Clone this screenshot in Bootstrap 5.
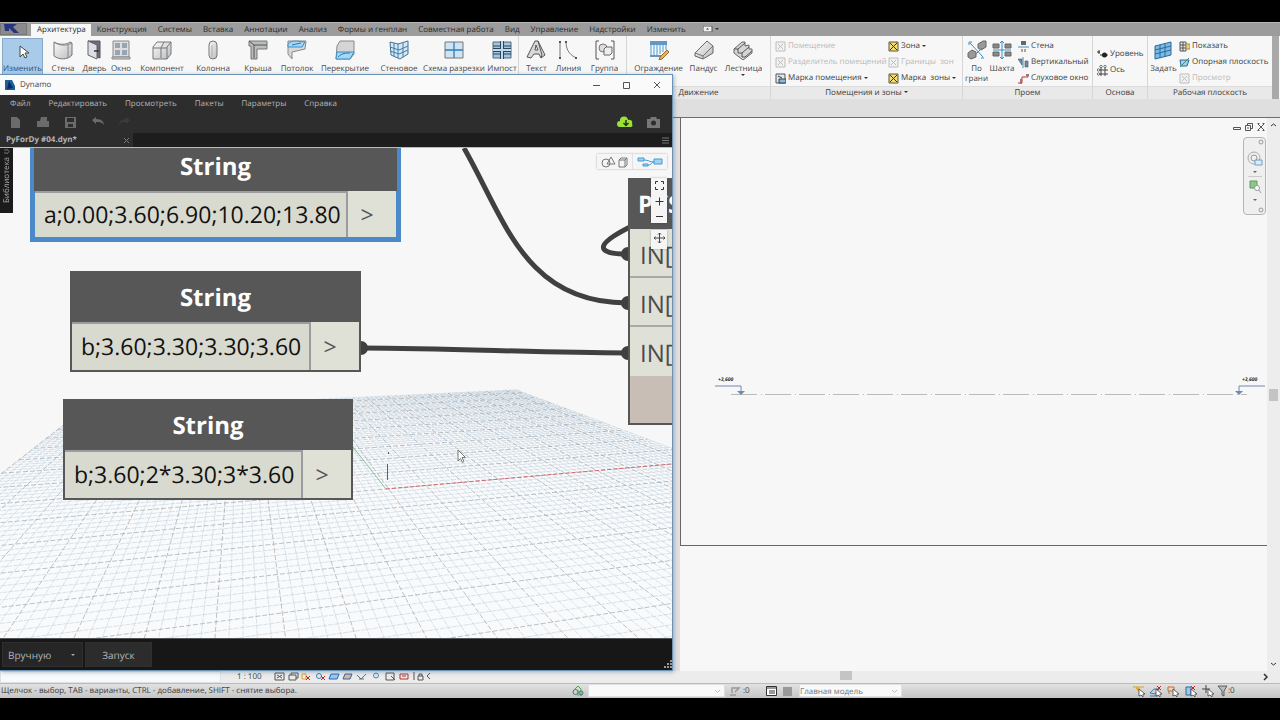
<!DOCTYPE html>
<html lang="ru">
<head>
<meta charset="utf-8">
<meta name="viewport" content="width=device-width, initial-scale=1">
<title>Dynamo</title>
<link href="https://cdn.jsdelivr.net/npm/bootstrap@5.3.0/dist/css/bootstrap.min.css" rel="stylesheet">
<script src="https://cdn.jsdelivr.net/npm/bootstrap@5.3.0/dist/js/bootstrap.bundle.min.js"></script>
<style>
  body { background:#000; font-family:"Open Sans","Noto Sans",sans-serif; font-size:8px; line-height:12px; color:#3c3c3c; padding:22px 0; text-rendering:geometricPrecision; }
  button, input, select { font:inherit; color:inherit; border:0; background:none; padding:0; border-radius:0; text-rendering:inherit; }
  button { white-space:nowrap; }
  a { color:inherit; text-decoration:none; white-space:nowrap; }
  svg { display:block; flex:none; }
  .revit { background:#f7f7f7; }

  /* ribbon */
  .tabs-row { height:14px; background:#9c9c9c; border-top:1px solid #b5b5b5; color:#2b2b2b; }
  .app-btn { width:27px; height:12px; background:#8a8a8a; border:1px solid #777; overflow:hidden; }
  .rtab { padding:0 5px 0 6px; height:12px; line-height:12px; }
  .rtab.active { background:#f7f7f7; }
  .ribbon { height:63px; background:#f7f7f7; }
  .rpanel { border-right:1px solid #d6d6d6; flex:none; }
  .ptitle { height:13px; line-height:12px; background:#e9e9e9; border-top:1px solid #dcdcdc; text-align:center; }
  .tools { display:grid; height:50px; justify-items:center; }
  .big { display:flex; flex-direction:column; align-items:center; padding-top:4px; line-height:10px; justify-self:center; color:#484848; }
  .big svg { width:20px; height:20px; margin-bottom:4px; }
  .big.sel { background:#a9cbea; border:1px solid #86a9c8; padding-top:3px; width:41px; height:40px; margin-top:2px; color:#2b4f74; }
  .big.sel svg { margin-bottom:2px; }
  .smalls { display:flex; flex-direction:column; justify-self:start; padding-top:2px; }
  .smalls button { display:flex; align-items:center; gap:2px; height:16px; line-height:16px; text-align:left; }
  .smalls svg { width:11px; height:11px; }
  .smalls button:disabled { color:#b9b9b9; }
  .smalls button:disabled svg { opacity:.35; filter:grayscale(1); }
  .caret { display:inline-block; border:2px solid transparent; border-top-color:#333; border-bottom:0; margin-left:4px; vertical-align:2px; }
  .p-build { grid-template-columns:45px 36px 27px 26px 56px 46px 44px 34px 62px 46px 64px 32px; }
  .p-model { grid-template-columns:35px 29px 43px; }
  .p-move { grid-template-columns:63px 27px 53px; }
  .p-room { grid-template-columns:113px 77px; padding-left:4px; width:191px; }
  .p-open { grid-template-columns:27px 24px 78px; }
  .p-base { grid-template-columns:54px; }
  .p-plane { grid-template-columns:31px 93px; }
  .handle { width:7px; background:#a9a9a9; margin-right:1px; }
  .options { height:19px; background:#dfdfdf; border-bottom:1px solid #6e6e6e; }

  /* drawing view */
  .gutter { width:680px; background:#e5e0de; }
  .sheet { border-left:1px solid #666; border-bottom:1px solid #666; flex:0 0 428px; }
  .vscroll { width:13px; background:#ededed; }
  .thumb { background:#c4c4c4; }
  .navbar-tool { right:1px; top:19px; width:23px; height:78px; border:1px solid #b5b5b5; border-radius:4px; background:#efefef; }
  .viewbar { height:12px; background:#ececec; }
  .status { height:15px; background:linear-gradient(#e2e2e2,#c4c4c4); border-top:1px solid #bbb; line-height:14px; }
  .status select { background:#f9f9f9; height:13px; appearance:none; border:1px solid #e0e0e0; width:100%; }
  .status .chev { right:4px; top:5px; }
  .status .count-end { width:52px; }

  /* Dynamo window */
  .dyn { left:0; top:74px; bottom:49px; width:673px; background:#1b1b1b; border:1px solid #6b93b5; border-left:0; box-shadow:1px 1px 4px rgba(60,110,150,.5); color:#b4b4b4; }
  .dyn-title { height:20px; background:#fafafa; color:#444; }
  .dyn-menu { height:17px; background:#2d2d2d; padding-left:10px; gap:18px; line-height:17px; }
  .dyn-tools { height:21px; background:#2d2d2d; padding-bottom:2px; }
  .dyn-tabs { height:14px; background:#1d1d1d; line-height:14px; }
  .dyn-tab { width:133px; background:#2d2d2d; font-weight:700; padding:0 3px 0 6px; }
  .stage { background:#f7f7f7; border-top:1px solid #bbb; }
  .lib { left:0; top:0; width:13px; height:65px; background:#1b1b1b; color:#aaa; }
  .lib span { writing-mode:vertical-rl; transform:rotate(180deg); line-height:13px; }
  .gnode { border:2px solid #575757; border-top:0; background:#dfe0d6; }
  .gnode h2 { margin:0 -2px; height:51px; line-height:54px; background:#575757; color:#fff; font-size:24px; font-weight:700; text-align:center; }
  .gnode .vals { height:48px; }
  .gnode input { min-width:0; width:0; color:#111; background:#d9dacf; border-top:2px solid #9c9ca0; border-right:2px solid #9c9ca0; padding:0 0 3px 9px; font-size:23px; }
  .gnode .port { width:48px; font-size:23px; color:#555; padding-right:10px; }
  .gnode.picked { border-color:#4a8ac8; outline:3px solid #4a8ac8; }
  .gnode.picked .vals { height:46px; }
  .gnode.picked h2 { margin:0 -1px; }
  .inp { height:49px; line-height:53px; border-bottom:2px solid #a9aaa6; font-size:24px; color:#4b4b4b; padding-left:10px; }
  .wid { background:#f5f5f5; box-shadow:0 0 2px rgba(0,0,0,.3); }
  .wid button { height:15px; }
  .dyn-foot { height:32px; background:#171717; font-size:10px; line-height:14px; border-top:1px solid #555; padding-left:2px; gap:2px; }
  .dyn-foot select, .dyn-foot .run { height:25px; background:#262626; color:#b4b4b4; border:1px solid #2f2f2f; }
  .dyn-foot select { width:81px; padding-left:5px; appearance:none; }
  .dyn-foot .run { width:67px; background:#2c2c2c; }
</style>
</head>
<body class="vh-100 overflow-hidden position-relative">

<svg width="0" height="0" class="position-absolute" aria-hidden="true">
  <defs>
    <linearGradient id="gr" x1="0" y1="0" x2="1" y2="1"><stop offset="0" stop-color="#fafafa"/><stop offset="1" stop-color="#b9bcc0"/></linearGradient>
    <symbol id="i-arrow" viewBox="0 0 20 20"><path d="M7 4v11l3-3 2 4 2-1-2-4h4z" fill="#fff" stroke="#444"/></symbol>
    <symbol id="i-wall" viewBox="0 0 20 20"><path d="M1 2c5 3 12 3 16 0l2 1v12c-4 5-13 5-18 1z" fill="url(#gr)" stroke="#777"/><path d="M1 2c5 4 13 4 18 1M15 5v13" fill="none" stroke="#888"/></symbol>
    <symbol id="i-door" viewBox="0 0 20 20"><path d="M4 1h12v17l-3-1V5z" fill="#6b6f7c" stroke="#555"/><path d="M4 1l9 4v14l-9-4z" fill="#dcdfe5" stroke="#666"/><path d="M10 11h5" stroke="#333" stroke-width="1.5"/></symbol>
    <symbol id="i-window" viewBox="0 0 20 20"><path d="M2 1h16v16H2z" fill="#ddd" stroke="#888"/><path d="M4 3h5v5H4zM11 3h5v5h-5zM4 10h5v5H4zM11 10h5v5h-5z" fill="#98a3b3"/><path d="M1 17h18v2H1z" fill="#ccc" stroke="#888"/></symbol>
    <symbol id="i-comp" viewBox="0 0 20 20"><path d="M1 7l4-5h14v12l-4 5H1z" fill="url(#gr)" stroke="#777"/><path d="M1 8h8v10M9 8l3-6M15 19V7l4-5M9 8h6" fill="none" stroke="#777"/></symbol>
    <symbol id="i-col" viewBox="0 0 20 20"><rect x="6" y="1" width="8" height="18" rx="4" fill="url(#gr)" stroke="#777"/><path d="M9 5v12" stroke="#aaa"/></symbol>
    <symbol id="i-roof" viewBox="0 0 20 20"><path d="M1 1h18v8H9v10H3V6H1z" fill="#b9bdbd" stroke="#777"/><path d="M1 1l5 4v13M6 5h13" fill="none" stroke="#555"/></symbol>
    <symbol id="i-ceil" viewBox="0 0 20 20"><path d="M1 1h18l-1 8-13 3v7l-4-5z" fill="#d8d8d8" stroke="#888"/><path d="M1 4c4-4 8-3 17-2l-3 5H1z" fill="#a8d5f0" stroke="#3a8fc7"/><path d="M5 5l9-2" stroke="#2a78b8"/></symbol>
    <symbol id="i-floor" viewBox="0 0 20 20"><path d="M5 1h14v13l-4 5H1l1-13z" fill="#d5d5d5" stroke="#888"/><path d="M2 12h17l-4 7H1z" fill="#a8d5f0" stroke="#3a8fc7"/><path d="M3 17c4-4 8-4 12-4" fill="none" stroke="#2a78b8"/></symbol>
    <symbol id="i-curtain" viewBox="0 0 20 20"><path d="M1 2l8 2 10-3v13l-8 5-9-4z" fill="#d4e8f5" stroke="#49728f"/><path d="M5 3v13M9 4v14M14 3v14M1 7l9 3 9-4M1 11l9 3 9-4" fill="none" stroke="#3f7fab"/></symbol>
    <symbol id="i-grid4" viewBox="0 0 20 20"><path d="M1 2h18v16H1z" fill="#cfe3f0" stroke="#777"/><path d="M10 2v16M1 10h18" stroke="#2b7fbd" stroke-width="1.3"/></symbol>
    <symbol id="i-mull" viewBox="0 0 20 20"><path d="M1 2h18v16H1z" fill="#9dc7e3" stroke="#567"/><path d="M1 6h18M1 14h18" stroke="#345"/><path d="M10 1v18M1 10h18" stroke="#345" stroke-width="4"/><path d="M10 1v18M1 10h18" stroke="#b9dcf2" stroke-width="2"/></symbol>
    <symbol id="i-text" viewBox="0 0 20 20"><path d="M1 17L9 1h3l7 14-4 3-2-4H8l-3 4zM9 10h3l-2-5z" fill="#d8d8d8" stroke="#555" fill-rule="evenodd"/><path d="M12 1l4 14-1 3" fill="none" stroke="#555"/></symbol>
    <symbol id="i-line" viewBox="0 0 20 20"><path d="M2 2v16M8 2c0 9 5 14 11 16" fill="none" stroke="#777"/><g fill="#555"><path d="M1 1h2v2H1zM1 17h2v2H1zM7 1h2v2H7zM17 17h2v2h-2z"/></g></symbol>
    <symbol id="i-group" viewBox="0 0 20 20"><path d="M4 1H1v18h3M16 1h3v18h-3" fill="none" stroke="#555"/><circle cx="8" cy="8" r="4" fill="#ddd" stroke="#777"/><path d="M9 9l2-2h6v6l-2 2H9z" fill="#eee" stroke="#666"/></symbol>
    <symbol id="i-rail" viewBox="0 0 20 20"><path d="M1 2h17M1 4h17M1 16h12" stroke="#3579ad" stroke-width="1.6"/><path d="M2 4v12M5 4v12M8 4v12M11 4v10M14 4v8M17 4v6" stroke="#4d9dd8"/><path d="M18 10l2 2-7 7-3 1 1-3z" fill="#e8b15a" stroke="#996b2a"/></symbol>
    <symbol id="i-ramp" viewBox="0 0 20 20"><path d="M1 13L13 1l6 5v7l-10 6-8-3z" fill="url(#gr)" stroke="#666"/><path d="M1 13l8 3L19 6M9 16v3" fill="none" stroke="#777"/></symbol>
    <symbol id="i-stair" viewBox="0 0 20 20"><path d="M1 9l8-7h3v4l4-1v4h3v4l-9 7-9-7z" fill="#d6d6d6" stroke="#666"/><path d="M1 9h4v4h4v4h3M5 9l7-6M9 13l7-6M12 17l7-6" fill="none" stroke="#555"/></symbol>
    <symbol id="i-face" viewBox="0 0 20 20"><path d="M11 4l5-3h3v6l-5 3-3-2zM1 13l4-3 4 2v5l-5 2-3-2z" fill="#999" stroke="#666"/><path d="M3 3l13 14M2 2h3M2 2v3M17 18h-3M8 15L15 8" stroke="#3a8fc7"/></symbol>
    <symbol id="i-shaft" viewBox="0 0 20 20"><path d="M1 4h6v4H1zM13 4h6v4h-6zM1 12h6v4H1zM13 12h6v4h-6z" fill="#888" stroke="#666"/><path d="M10 1v18M8 3l2-2 2 2M8 17l2 2 2-2M1 10h18" fill="none" stroke="#3a8fc7"/></symbol>
    <symbol id="i-set" viewBox="0 0 20 20"><path d="M2 6l16-4v13L2 19z" fill="#7dbbe6" stroke="#2a6a9b"/><path d="M7 5v13M12 4v13M2 10l16-4M2 14l16-4" stroke="#2a6a9b"/></symbol>
    <symbol id="s-room" viewBox="0 0 11 11"><path d="M1 1h9v9H1z" fill="#dfe8ef" stroke="#555"/><path d="M3 3l5 5M8 3L3 8" stroke="#555"/></symbol>
    <symbol id="s-tag" viewBox="0 0 11 11"><path d="M1 1h9v9H1z" fill="#dfe8ef" stroke="#555"/><path d="M3 3l4 2" stroke="#333"/><path d="M4 6h7v4H4z" fill="#8fb7d6" stroke="#245"/></symbol>
    <symbol id="s-zone" viewBox="0 0 11 11"><path d="M1 1h9v9H1z" fill="#f7dc6a" stroke="#555"/><path d="M2 2l7 7M9 2L2 9" stroke="#333"/></symbol>
    <symbol id="s-wallop" viewBox="0 0 11 11"><path d="M0 6h11" stroke="#3a8fc7"/><path d="M3 0h5v4H3z" fill="#666"/><path d="M4 8v3M7 8v3" stroke="#555"/></symbol>
    <symbol id="s-vert" viewBox="0 0 11 11"><path d="M5 0v11" stroke="#3a8fc7"/><path d="M0 2h4v6zM7 4h3v6H7z" fill="#789" stroke="#456" stroke-width=".6"/></symbol>
    <symbol id="s-dorm" viewBox="0 0 11 11"><path d="M0 10h4V4h6V1" fill="none" stroke="#b33"/><path d="M2 6h2v5H2zM8 1h3v2H8z" fill="#977"/></symbol>
    <symbol id="s-level" viewBox="0 0 11 11"><path d="M0 3h3M2 1v4M3 6h8" stroke="#333"/><circle cx="7.500" cy="6" r="2.500" fill="#222"/></symbol>
    <symbol id="s-axis" viewBox="0 0 11 11"><path d="M4 2v9M8 2v9M2 5h9M2 9h9" stroke="#444"/><g fill="#fff" stroke="#444" stroke-width=".7"><circle cx="4" cy="1.500" r="1.200"/><circle cx="8" cy="1.500" r="1.200"/><circle cx="1.500" cy="5" r="1.200"/><circle cx="1.500" cy="9" r="1.200"/></g></symbol>
    <symbol id="s-show" viewBox="0 0 11 11"><path d="M1 1h6v9H1zM4 1v9M1 4h6M1 7h6" fill="#e8e8e8" stroke="#555"/><path d="M7 3h4v5H7z" fill="#f3d24c" stroke="#987"/></symbol>
    <symbol id="s-ref" viewBox="0 0 11 11"><path d="M1 3h9L8 9H2z" fill="#9fd0f0" stroke="#2a6a9b"/><path d="M1 10L10 1" stroke="#487"/></symbol>
    <g id="lev"><path d="M0 0h26v8" fill="none" stroke="#6f8cae"/><path d="M22 5h8l-4 4z" fill="#6f8cae"/></g>
  </defs>
</svg>

<div class="revit d-flex flex-column h-100">
  <nav class="tabs-row d-flex align-items-end" aria-label="Лента">
    <button class="app-btn me-1 align-self-start" aria-label="Меню приложения"><svg width="25" height="11"><path d="M3 0h13l-4 3 6 6h-5L8 4v3H4z" fill="#27357f"/></svg></button>
    <a href="#" class="rtab active">Архитектура</a><a href="#" class="rtab">Конструкция</a><a href="#" class="rtab">Системы</a><a href="#" class="rtab">Вставка</a><a href="#" class="rtab">Аннотации</a><a href="#" class="rtab">Анализ</a><a href="#" class="rtab">Формы и генплан</a><a href="#" class="rtab">Совместная работа</a><a href="#" class="rtab">Вид</a><a href="#" class="rtab">Управление</a><a href="#" class="rtab">Надстройки</a><a href="#" class="rtab">Изменить</a>
    <button class="ms-2 ps-1 mb-1" aria-label="Вид ленты"><svg width="16" height="6"><path d="M0 0h9v6H0z" fill="#eee" stroke="#555"/><path d="M3 3.500h3L4.500 2z" fill="#333"/><path d="M12 2h4l-2 2z" fill="#333"/></svg></button>
  </nav>

  <div class="ribbon d-flex overflow-hidden">
    <section class="rpanel"><div class="tools p-build">
      <button class="big sel"><svg><use href="#i-arrow"/></svg>Изменить</button>
      <button class="big"><svg><use href="#i-wall"/></svg>Стена</button>
      <button class="big"><svg><use href="#i-door"/></svg>Дверь</button>
      <button class="big"><svg><use href="#i-window"/></svg>Окно</button>
      <button class="big"><svg><use href="#i-comp"/></svg>Компонент</button>
      <button class="big"><svg><use href="#i-col"/></svg>Колонна</button>
      <button class="big"><svg><use href="#i-roof"/></svg>Крыша</button>
      <button class="big"><svg><use href="#i-ceil"/></svg>Потолок</button>
      <button class="big"><svg><use href="#i-floor"/></svg>Перекрытие</button>
      <button class="big"><svg><use href="#i-curtain"/></svg>Стеновое</button>
      <button class="big"><svg><use href="#i-grid4"/></svg>Схема разрезки</button>
      <button class="big"><svg><use href="#i-mull"/></svg>Импост</button>
    </div></section>
    <section class="rpanel"><div class="tools p-model">
      <button class="big"><svg><use href="#i-text"/></svg>Текст</button>
      <button class="big"><svg><use href="#i-line"/></svg>Линия</button>
      <button class="big"><svg><use href="#i-group"/></svg>Группа</button>
    </div></section>
    <section class="rpanel"><div class="tools p-move">
      <button class="big"><svg><use href="#i-rail"/></svg>Ограждение</button>
      <button class="big"><svg><use href="#i-ramp"/></svg>Пандус</button>
      <button class="big"><svg><use href="#i-stair"/></svg>Лестница<span class="caret ms-0"></span></button>
    </div><div class="ptitle">Движение</div></section>
    <section class="rpanel"><div class="tools p-room">
      <div class="smalls"><button disabled><svg><use href="#s-room"/></svg>Помещение</button><button disabled><svg><use href="#s-room"/></svg>Разделитель помещений</button><button><svg><use href="#s-tag"/></svg>Марка помещения <span class="caret ms-0"></span></button></div>
      <div class="smalls"><button><svg><use href="#s-zone"/></svg>Зона <span class="caret ms-0"></span></button><button disabled><svg><use href="#s-room"/></svg>Границы&nbsp; зон</button><button><svg><use href="#s-zone"/></svg>Марка&nbsp; зоны <span class="caret ms-0"></span></button></div>
    </div><div class="ptitle">Помещения и зоны <span class="caret ms-0"></span></div></section>
    <section class="rpanel"><div class="tools p-open">
      <button class="big"><svg><use href="#i-face"/></svg>По<br>грани</button>
      <button class="big"><svg><use href="#i-shaft"/></svg>Шахта</button>
      <div class="smalls ps-1"><button><svg><use href="#s-wallop"/></svg>Стена</button><button><svg><use href="#s-vert"/></svg>Вертикальный</button><button><svg><use href="#s-dorm"/></svg>Слуховое окно</button></div>
    </div><div class="ptitle">Проем</div></section>
    <section class="rpanel"><div class="tools p-base">
      <div class="smalls ps-1 justify-content-center"><button><svg><use href="#s-level"/></svg>Уровень</button><button><svg><use href="#s-axis"/></svg>Ось</button></div>
    </div><div class="ptitle">Основа</div></section>
    <section class="rpanel flex-grow-1 border-0"><div class="tools p-plane">
      <button class="big"><svg><use href="#i-set"/></svg>Задать</button>
      <div class="smalls"><button><svg><use href="#s-show"/></svg>Показать</button><button><svg><use href="#s-ref"/></svg>Опорная плоскость</button><button disabled><svg><use href="#s-room"/></svg>Просмотр</button></div>
    </div><div class="ptitle">Рабочая плоскость</div></section>
    <div class="handle"></div>
  </div>
  <div class="options"></div>

  <main class="flex-grow-1 d-flex overflow-hidden">
    <div class="gutter flex-shrink-0"></div>
    <div class="flex-grow-1 d-flex flex-column position-relative">
      <div class="sheet">
        <svg width="100%" height="100%" aria-label="Уровень">
          <path d="M50 276.500H566" stroke="#bbb" stroke-dasharray="26 4 1 3"/>
          <use href="#lev" x="34" y="268"/><use href="#lev" transform="translate(584 268) scale(-1 1)"/>
          <text x="37" y="263" font-size="5" font-weight="700" font-style="italic" fill="#222">+3,600</text>
          <text x="561" y="263" font-size="5" font-weight="700" font-style="italic" fill="#222">+3,600</text>
        </svg>
      </div>
      <div class="position-absolute end-0 top-0 pt-1">
        <svg width="34" height="10" fill="none" stroke="#555"><path d="M.5 5.500h7v2h-7zM12.500 3.500h5v5h-5zM14.500 3V1.500h5v5H18M14 6h2M25 2l6 6M31 2l-6 6M24.500 1.500h2M29.500 1.500h2M24.500 8.500h2M29.500 8.500h2"/></svg>
      </div>
      <div class="navbar-tool position-absolute d-flex flex-column align-items-center">
        <svg width="21" height="76" fill="none" stroke="#999"><circle cx="17" cy="4" r="2"/><circle cx="17" cy="72" r="2"/><circle cx="10" cy="20" r="6" stroke="#aaa"/><circle cx="10" cy="20" r="3"/><path d="M11 22h7v5h-7z" fill="#dcebf5" stroke="#6fa0c4"/><path d="M9 33h4l-2 2zM9 61h4l-2 2z" fill="#666" stroke="none"/><path d="M4 38.500h14" stroke="#ccc"/><path d="M6 43h7v7H6z" fill="#8fc48f" stroke="#5a9a5a"/><circle cx="13" cy="50" r="2.500" fill="#fff"/><path d="M15 52l2 3"/></svg>
      </div>
    </div>
    <div class="vscroll d-flex flex-column align-items-center justify-content-between pt-1">
      <svg width="9" height="6"><path d="M2 4l2.500-2L7 4" fill="none" stroke="#333"/></svg>
      <div class="thumb w-75" style="height:12px"></div>
      <svg width="9" height="10"><path d="M2 2l2.500 2L7 2" fill="none" stroke="#333"/></svg>
    </div>
  </main>

  <div class="viewbar d-flex align-items-center">
    <div class="border bg-light h-100" style="width:221px"></div>
    <span class="ms-3">1 : 100</span>
    <svg class="ms-2" width="162" height="10" fill="none" stroke="#555"><path d="M5 1h9v7H5zM7 3l5 3M12 3L7 6M19 3h7v5h-7zM21 3V1h7v5h-2"/><path d="M32 2h4v5h-4z" stroke="#d9a520"/><path d="M36 4l4 4M40 4l-4 4" stroke="#c22"/><circle cx="49" cy="4" r="2.500" stroke="#3a7fb7"/><path d="M51 4l4 4M55 4l-4 4" stroke="#c22"/><path d="M59 7l2-5h8l-2 5z" fill="#9cc8e8" stroke="#26c"/><path d="M73 7l2-5h7l-2 5z" fill="#e0b79c" stroke="#36a"/><path d="M87 3l4 4 5-5M89 7h5" stroke="#577"/><circle cx="106" cy="3.500" r="2.500" fill="#cfe8fa" stroke="#58a"/><path d="M116 1h8v7h-8zM121 4l4 4"/><path d="M130 7V2h8v5zM132 4h4" stroke="#a33"/><path d="M144 0v8M148 4h5v4h-5zM149 4V2h3v2M160 1l-3 3 3 3"/></svg>
    <div class="flex-grow-1 d-flex justify-content-center h-100"><div class="thumb h-75" style="width:12px"></div></div>
    <svg width="20" height="10"><path d="M4 2l3 3-3 3" fill="none" stroke="#333" stroke-width="1.500"/></svg>
  </div>
  <footer class="status d-flex align-items-center">
    <span class="flex-shrink-0" style="width:572px;padding-left:1px">Щелчок - выбор, TAB - варианты, CTRL - добавление, SHIFT - снятие выбора.</span>
    <svg width="12" height="12" fill="none" stroke="#478"><circle cx="3.500" cy="7" r="2.500"/><path d="M3 4l3-3 3 3v7M6 5v6" stroke="#4a4"/><circle cx="9" cy="8" r="2"/></svg>
    <div style="width:137px" class="ms-1 position-relative"><select aria-label="Рабочий набор"><option></option></select><svg class="chev position-absolute" width="7" height="5"><path d="M1 1l2.500 2.500L6 1" fill="none" stroke="#bbb"/></svg></div>
    <svg class="ms-1" width="14" height="12"><path d="M1 10h6M3 8V3h7l-4 4" fill="none" stroke="#999" stroke-width="1.500"/></svg><span style="width:22px">:0</span>
    <svg width="30" height="12"><path d="M1.500 1.500h10v9h-10zM1 3h11M4 6h6M4 8h6" fill="#fff" stroke="#333"/><path d="M18 2h9v9h-9z" fill="#999"/></svg>
    <div style="width:103px" class="ms-1 position-relative"><select class="text-secondary" aria-label="Вариант"><option>Главная модель</option></select><svg class="chev position-absolute" width="7" height="5"><path d="M1 1l2.500 2.500L6 1" fill="none" stroke="#bbb"/></svg></div>
    <svg class="ms-auto" width="96" height="12" fill="none"><path d="M1 2h11M4 3l3 4V3z" fill="#f0c040" stroke="#d9a520"/><path d="M18 8l4-4h5l-4 5zM18 11h8" stroke="#3a7fb7"/><path d="M25 1l4 4M29 1l-4 4" stroke="#c22"/><path d="M36 2h6v4h-6zM37 9V6" stroke="#d2691e"/><path d="M54 2h5v8h-5z" fill="#9cc8e8" stroke="#36a"/><path d="M59 1l4 4M63 1l-4 4" stroke="#c22"/><path d="M70 4h8M74 0v8" stroke="#444"/><g fill="#fff" stroke="#444" stroke-width=".8"><path d="M7 4v7l2-1 2 2V9h2zM24 4v7l2-1 2 2V9h2zM41 4v7l2-1 2 2V9h2zM59 4v7l2-1 2 2V9h2zM76 4v7l2-1 2 2V9h2z"/><path d="M86 1h9l-3 5v5l-2-1V6z" fill="#bbb"/></g></svg><span class="count-end">:0</span>
  </footer>
</div>

<div class="dyn position-absolute d-flex flex-column">
  <header class="dyn-title d-flex align-items-center ps-1 pe-2 flex-shrink-0">
    <svg width="12" height="12"><path d="M1 1h7l3 6v4H1z" fill="#1d5f9e"/><path d="M3 10l2-8 4 7z" fill="#0b2a5a"/></svg>
    <span class="ms-1 me-auto">Dynamo</span>
    <button class="me-3" aria-label="Свернуть"><svg width="14" height="10"><path d="M3 5.500h7" stroke="#555"/></svg></button>
    <button class="me-3" aria-label="Развернуть"><svg width="14" height="10"><path d="M3.500 2.500h6v6h-6z" fill="none" stroke="#555"/></svg></button>
    <button aria-label="Закрыть"><svg width="14" height="10"><path d="M4 2l6 6M10 2L4 8" stroke="#555"/></svg></button>
  </header>
  <nav class="dyn-menu d-flex flex-shrink-0"><a href="#">Файл</a><a href="#">Редактировать</a><a href="#">Просмотреть</a><a href="#">Пакеты</a><a href="#">Параметры</a><a href="#">Справка</a></nav>
  <div class="dyn-tools d-flex align-items-center flex-shrink-0 ps-2 pe-1">
    <svg width="125" height="14" fill="#6b6b6b"><path d="M3 2h6l3 3v8H3zM29 6h3l1-4h6v4h2v6H29z M57 2h11v11H57zm2 1v4h7V3zm1 6v3h5V9z" fill-rule="evenodd"/><path d="M84 5l4-3v2c6 0 8 3 8 6-2-3-4-3-8-3v2z"/><path d="M122 5l-4-3v2c-5 0-7 3-7 6 2-3 3-3 7-3v2z" fill="#3b3b3b"/></svg>
    <svg class="ms-auto me-1" width="49" height="14"><path d="M5 12a3 3 0 010-6 4 4 0 018-1 3 3 0 014 4 2 2 0 01-1 3z" fill="#9be238"/><path d="M11 5v5M8.500 8l2.500 2.500L13.500 8" fill="none" stroke="#2d2d2d" stroke-width="1.500"/><path d="M32 4h3l1-2h5l1 2h3v9H32z" fill="#777"/><circle cx="38.500" cy="8" r="2.500" fill="#2d2d2d"/></svg>
  </div>
  <div class="dyn-tabs d-flex justify-content-between flex-shrink-0">
    <div class="dyn-tab d-flex justify-content-between align-items-center"><span>PyForDy #04.dyn*</span><button aria-label="Закрыть вкладку"><svg width="7" height="7"><path d="M1 1l5 5M6 1L1 6" stroke="#777"/></svg></button></div>
    <svg width="12" height="13"><path d="M2 5h7M2 7.500h7M2 10h7" stroke="#777"/></svg>
  </div>

  <div class="stage flex-grow-1 position-relative overflow-hidden">
    <svg class="position-absolute w-100 h-100" aria-hidden="true"><g transform="translate(0 -148)">
      <g id="floor"></g>
      <path d="M386 489L672 464" stroke="#d8666e" stroke-dasharray="4 2"/><path d="M386 489L353 447" stroke="#8fbf9a"/><path d="M387.500 464v16" stroke="#5a4fd0"/><path d="M388.500 452v2" stroke="#555"/>
      <g fill="none" stroke="#404040" stroke-width="5"><path d="M464 148C505 220 525 303 627 303"/><path d="M630 227C594 245 596 254 627 254"/><path d="M362 348C450 348 540 353 627 353"/></g>
      <g fill="#404040"><circle cx="361" cy="348" r="7"/><circle cx="628" cy="254" r="7"/><circle cx="628" cy="303" r="7"/><circle cx="628" cy="353" r="7"/></g>
      <path d="M458 450v11l2.500-2.500 2 4 1.500-1-2-4h3.500z" fill="#fff" stroke="#777"/>
    </g></svg>

    <article class="gnode picked position-absolute" style="left:33px;top:-8px;width:365px">
      <h2>String</h2><div class="vals d-flex"><input class="flex-grow-1" aria-label="String" value="a;0.00;3.60;6.90;10.20;13.80"><button class="port">&gt;</button></div></article>
    <article class="gnode position-absolute" style="left:70px;top:123px;width:291px">
      <h2>String</h2><div class="vals d-flex"><input class="flex-grow-1" aria-label="String" value="b;3.60;3.30;3.30;3.60"><button class="port">&gt;</button></div></article>
    <article class="gnode position-absolute" style="left:63px;top:251px;width:290px">
      <h2>String</h2><div class="vals d-flex"><input class="flex-grow-1" aria-label="String" value="b;3.60;2*3.30;3*3.60"><button class="port">&gt;</button></div></article>
    <article class="gnode position-absolute" style="left:628px;top:30px;width:120px">
      <h2 class="text-start ps-2 ms-0">PYS</h2><div class="inp">IN[0]</div><div class="inp">IN[1]</div><div class="inp border-0">IN[2]</div><div style="height:47px;background:#c8beb5"></div></article>

    <div class="lib position-absolute d-flex flex-column align-items-center"><svg width="8" height="9"><path d="M1 2h3M1 5h3M4 1l2 2.500L4 6" fill="none" stroke="#777"/></svg><span>Библиотека</span></div>

    <div class="wid position-absolute d-flex" style="right:5px;top:6px">
      <button class="px-1 border-end" aria-label="3D"><svg width="27" height="15" fill="none" stroke="#777"><circle cx="5" cy="9" r="4"/><path d="M6 10l4-7 4 7zM18 6l2-2h6v7l-2 2h-6zM18 6h6v7M24 6l2-2"/></svg></button>
      <button class="px-1" aria-label="Граф"><svg width="26" height="15" fill="#9fd3f3" stroke="#3f9dd6"><path d="M1 4h6v3H1zM6 10h5v2H6zM17 5h8v5h-8z"/><path d="M7 6c5 0 5 2 10 2M11 11c4 0 3-3 6-3" fill="none"/></svg></button>
    </div>
    <div class="wid position-absolute d-flex flex-column" style="right:5px;top:30px">
      <button aria-label="Вписать"><svg width="16" height="15" fill="none" stroke="#333"><path d="M4.500 6V3.500H7M10 3.500h2.500V6M12.500 9v2.500H10M7 11.500H4.500V9"/></svg></button>
      <button aria-label="Увеличить"><svg width="16" height="15"><path d="M4.500 8.500h8M8.500 4.500v8" stroke="#333"/></svg></button>
      <button aria-label="Уменьшить"><svg width="16" height="15"><path d="M5 8.500h7" stroke="#333"/></svg></button>
    </div>
    <div class="wid position-absolute" style="right:5px;top:82px">
      <button aria-label="Панорамировать"><svg width="16" height="15" fill="none" stroke="#444"><path d="M3 8h11M8.500 3v10M7 4.500L8.500 3 10 4.500M7 11.500L8.500 13l1.500-1.500M4.500 6.500L3 8l1.500 1.500M12.500 6.500L14 8l-1.500 1.500"/></svg></button>
    </div>
  </div>

  <div class="dyn-foot d-flex align-items-center position-relative flex-shrink-0">
    <div class="position-relative"><select aria-label="Режим запуска"><option>Вручную</option></select><span class="caret position-absolute" style="right:8px;top:12px;border-top-color:#aaa"></span></div>
    <button class="run">Запуск</button>
    <svg class="ms-auto align-self-end" width="10" height="10" fill="#999"><path d="M8 0h2v2H8zM5 3h2v2H5zM8 3h2v2H8zM2 6h2v2H2zM5 6h2v2H5zM8 6h2v2H8z"/></svg>
  </div>
</div>

<script>
  // Ground grid in perspective: two line families meeting at points on the horizon (y = 286).
  const at = (k, j) => {
    const a = 0.728 + 0.2005 * k, b = 11.44 - 1.005 * j, t = 2467 / (a + b);
    return (241 + t * a).toFixed(1) + ' ' + (286 + t).toFixed(1);
  };
  const far = -9.6;
  let minor = '', major = '';
  for (let i = -50; i <= 50; i++) {
    const n = i / 5;
    const d = (n <= 9.6 ? `M${at(n, far)}L${at(n, 10)}` : '') + (n >= far ? `M${at(-10, n)}L${at(9.6, n)}` : '');
    if (i % 5) minor += d; else major += d;
  }
  document.getElementById('floor').innerHTML =
    `<path d="M${at(-10,far)}L${at(9.6,far)}L${at(9.6,10)}L${at(-10,10)}z" fill="#f9fafb"/>` +
    `<path d="${minor}" fill="none" stroke="#a9bfd0" stroke-opacity=".42" stroke-width="1" stroke-dasharray="5 1"/>` +
    `<path d="${major}" fill="none" stroke="#8b9298" stroke-opacity=".55" stroke-width="1" stroke-dasharray="5 2"/>`;
</script>
</body>
</html>
